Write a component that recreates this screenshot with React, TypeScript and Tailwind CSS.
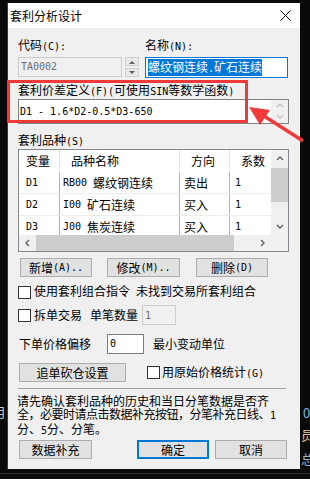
import React from "react";

function T({ s }: { s: string }) {
  const parts = s.match(/[\x20-\x7e]+|[^\x20-\x7e]+/g) || [];
  return (
    <>
      {parts.map((p, i) =>
        /^[\x20-\x7e]+$/.test(p) ? (
          <span key={i} className="font-['DejaVu_Sans_Mono',monospace] text-[10px] whitespace-pre">
            {p}
          </span>
        ) : (
          <span key={i}>{p}</span>
        )
      )}
    </>
  );
}

function Btn({ label, w, primary }: { label: string; w: string; primary?: boolean }) {
  return (
    <div
      className={
        "h-[19px] flex items-center justify-center bg-[#e1e1e1] whitespace-nowrap " +
        w +
        (primary ? " border-2 border-[#0078d7]" : " border border-[#adadad]")
      }
    >
      <T s={label} />
    </div>
  );
}

function Check() {
  return <div className="w-[13px] h-[13px] border border-[#333333] bg-white shrink-0" />;
}

function Chevron({ dir, color }: { dir: "up" | "down" | "left" | "right"; color: string }) {
  const d =
    dir === "up"
      ? "M1 5 L4 2 L7 5"
      : dir === "down"
      ? "M1 2 L4 5 L7 2"
      : dir === "left"
      ? "M5 1 L2 4 L5 7"
      : "M2 1 L5 4 L2 7";
  return (
    <svg width="8" height="8" viewBox="0 0 8 8">
      <path d={d} fill="none" stroke={color} strokeWidth="1.4" />
    </svg>
  );
}

const rows = [
  ["D1", "RB00 螺纹钢连续", "卖出", "1"],
  ["D2", "I00 矿石连续", "买入", "1"],
  ["D3", "J00 焦炭连续", "买入", "1"],
];

export default function App() {
  return (
    <div className="relative w-[310px] h-[479px] overflow-hidden bg-[#0a0a0a] font-['Noto_Sans_CJK_SC',sans-serif] text-[12px] leading-[14px] text-black">
      {/* desktop fragments behind the dialog */}
      <div className="absolute left-[-7px] top-[405px] text-[13px] text-[#c8c8c8]">月</div>
      <div className="absolute left-[303px] top-[406px] text-[13px] text-[#7fb6e0]">0</div>
      <div className="absolute left-[301px] top-[428px] text-[13px] text-[#e0c9a0]">员</div>
      <div className="absolute left-[301px] top-[452px] text-[13px] text-[#9fb3c8]">总</div>
      <div className="absolute left-0 top-[473px] w-[310px] h-px bg-[#2a2f38]" />

      <div className="pl-[7px] pt-[3px]">
        <div className="w-[293px] h-[466px] bg-[#f0f0f0] flex flex-col border-l border-[#3a3a3a]">
          {/* title bar */}
          <div className="h-[25px] bg-white flex items-center justify-between pl-[2px] pr-[9px] shrink-0">
            <span>套利分析设计</span>
            <svg width="11" height="11" viewBox="0 0 11 11">
              <path d="M0.5 0.5 L10.5 10.5 M10.5 0.5 L0.5 10.5" stroke="#000" strokeWidth="1" />
            </svg>
          </div>

          {/* body */}
          <div className="pl-[10px] pr-[11px] flex flex-col">
            <div className="mt-[10px] h-[14px] flex">
              <div className="w-[127px]">
                <T s="代码(C):" />
              </div>
              <div>
                <T s="名称(N):" />
              </div>
            </div>

            <div className="mt-[5px] h-[21px] flex items-start">
              <div className="w-[104px] h-[20px] border border-[#cccccc] bg-[#f0f0f0] text-[#6d6d6d] flex items-center pl-[2px]">
                <T s="TA0002" />
              </div>
              <div className="ml-[3px] w-[14px] h-[20px] flex flex-col justify-between">
                <div className="h-[9px] bg-[#e8e8e8] border border-[#d0d0d0] flex items-center justify-center">
                  <svg width="6" height="4" viewBox="0 0 6 4">
                    <path d="M0 4 L3 1 L6 4 Z" fill="#606060" />
                  </svg>
                </div>
                <div className="h-[9px] bg-[#e8e8e8] border border-[#d0d0d0] flex items-center justify-center">
                  <svg width="6" height="4" viewBox="0 0 6 4">
                    <path d="M0 0 L3 3 L6 0 Z" fill="#606060" />
                  </svg>
                </div>
              </div>
              <div className="ml-[6px] w-[143px] h-[21px] border border-[#0078d7] bg-white flex items-center pl-[2px]">
                <span className="bg-[#0078d7] text-white leading-[15px] whitespace-nowrap">
                  <T s="螺纹钢连续.矿石连续" />
                </span>
              </div>
            </div>

            <div className="mt-[5px] h-[14px] whitespace-nowrap">
              <T s="套利价差定义(F)(可使用SIN等数学函数)" />
            </div>

            <div className="mt-[2px] h-[25px] border border-[#828282] bg-white flex">
              <div className="flex-1 pl-[1px] pt-[3px] leading-[14px]">
                <T s="D1 - 1.6*D2-0.5*D3-650" />
              </div>
              <div className="w-[17px] bg-[#f0f0f0] flex flex-col items-center justify-between py-[2px]">
                <Chevron dir="up" color="#c4c4c4" />
                <Chevron dir="down" color="#c4c4c4" />
              </div>
            </div>

            <div className="mt-[9px] h-[14px]">
              <T s="套利品种(S)" />
            </div>

            {/* list view */}
            <div className="mt-[2px] h-[103px] border border-[#828790] bg-white flex flex-col">
              <div className="h-[85px] flex">
                <div className="flex-1 flex flex-col overflow-hidden">
                  <div className="h-[22px] flex items-center shrink-0">
                    <div className="w-[41px] h-full flex items-center pl-[7px] border-r border-[#e5e5e5]">变量</div>
                    <div className="w-[120px] h-full flex items-center pl-[11px] border-r border-[#e5e5e5]">品种名称</div>
                    <div className="w-[50px] h-full flex items-center pl-[11px] border-r border-[#e5e5e5]">方向</div>
                    <div className="flex-1 h-full flex items-center pl-[11px] whitespace-nowrap">系数</div>
                  </div>
                  <div className="h-[63px] overflow-hidden">
                    {rows.map((r, i) => (
                      <div key={i} className="h-[22px] flex border-b border-[#ececec]">
                        <div className="w-[41px] h-full flex items-center pl-[7px] border-r border-[#b4b4b4]">
                          <T s={r[0]} />
                        </div>
                        <div className="w-[120px] h-full flex items-center pl-[3px] border-r border-[#b4b4b4] whitespace-nowrap">
                          <T s={r[1]} />
                        </div>
                        <div className="w-[50px] h-full flex items-center pl-[4px] border-r border-[#b4b4b4]">
                          <T s={r[2]} />
                        </div>
                        <div className="flex-1 h-full flex items-center pl-[5px]">
                          <T s={r[3]} />
                        </div>
                      </div>
                    ))}
                  </div>
                </div>
                <div className="w-[17px] bg-[#f0f0f0] flex flex-col">
                  <div className="h-[17px] flex items-center justify-center">
                    <Chevron dir="up" color="#606060" />
                  </div>
                  <div className="h-[34px] bg-[#cdcdcd] mt-px" />
                  <div className="flex-1" />
                  <div className="h-[17px] flex items-center justify-center">
                    <Chevron dir="down" color="#606060" />
                  </div>
                </div>
              </div>
              <div className="h-[16px] flex bg-[#f0f0f0]">
                <div className="w-[17px] flex items-center justify-center">
                  <Chevron dir="left" color="#606060" />
                </div>
                <div className="w-[198px] bg-[#cdcdcd]" />
                <div className="flex-1" />
                <div className="w-[17px] flex items-center justify-center">
                  <Chevron dir="right" color="#606060" />
                </div>
                <div className="w-[17px]" />
              </div>
            </div>

            <div className="mt-[6px] flex pl-[2px]">
              <Btn label="新增(A).." w="w-[72px]" />
              <div className="ml-[15px]">
                <Btn label="修改(M).." w="w-[73px]" />
              </div>
              <div className="ml-[16px]">
                <Btn label="删除(D)" w="w-[72px]" />
              </div>
            </div>

            <div className="mt-[8px] h-[14px] flex items-center whitespace-nowrap">
              <Check />
              <span className="ml-[3px]">
                <T s="使用套利组合指令 未找到交易所套利组合" />
              </span>
            </div>

            <div className="mt-[6px] h-[20px] flex items-center whitespace-nowrap">
              <Check />
              <span className="ml-[3px]">拆单交易</span>
              <span className="ml-[8px]">单笔数量</span>
              <div className="ml-[4px] w-[34px] h-[20px] border border-[#cccccc] bg-[#f0f0f0] text-[#6d6d6d] pl-[2px] pt-[1px]">
                <T s="1" />
              </div>
            </div>

            <div className="mt-[9px] h-[20px] flex items-center whitespace-nowrap">
              <span className="ml-[1px]">下单价格偏移</span>
              <div className="ml-[16px] w-[37px] h-[20px] border border-[#7a7a7a] bg-white flex items-center pl-[2px]">
                <T s="0" />
              </div>
              <span className="ml-[9px]">最小变动单位</span>
            </div>

            <div className="mt-[9px] h-[19px] flex items-center whitespace-nowrap">
              <div className="ml-[1px]">
                <Btn label="追单砍仓设置" w="w-[107px]" />
              </div>
              <div className="ml-[21px]">
                <Check />
              </div>
              <span className="ml-[2px]">
                <T s="用原始价格统计(G)" />
              </span>
            </div>

            <div className="mt-[6px] h-px w-[268px] bg-[#a0a0a0]" />

            <div className="mt-[5px] h-[38px] leading-[13px] whitespace-nowrap -ml-[1px]">
              <div>请先确认套利品种的历史和当日分笔数据是否齐</div>
              <div className="tracking-[-0.5px]">
                <T s="全，必要时请点击数据补充按钮，分笔补充日线、1" />
              </div>
              <div>
                <T s="分、5分、分笔。" />
              </div>
            </div>

            <div className="mt-[8px] flex pl-[1px]">
              <Btn label="数据补充" w="w-[73px]" />
              <div className="ml-[45px]">
                <Btn label="确定" w="w-[72px]" primary />
              </div>
              <div className="ml-[6px]">
                <Btn label="取消" w="w-[72px]" />
              </div>
            </div>
          </div>
        </div>
      </div>

      {/* red annotation overlay */}
      <div className="absolute left-[7px] top-[80px] w-[241px] h-[43px] border-[3px] border-[#f03a3a] pointer-events-none" />
      <svg className="absolute left-0 top-0 pointer-events-none" width="310" height="479" viewBox="0 0 310 479">
        <line x1="303" y1="141" x2="264" y2="116" stroke="#f03a3a" strokeWidth="3.5" />
        <polygon points="249,107 270,110 260,125" fill="#f03a3a" />
      </svg>
    </div>
  );
}
